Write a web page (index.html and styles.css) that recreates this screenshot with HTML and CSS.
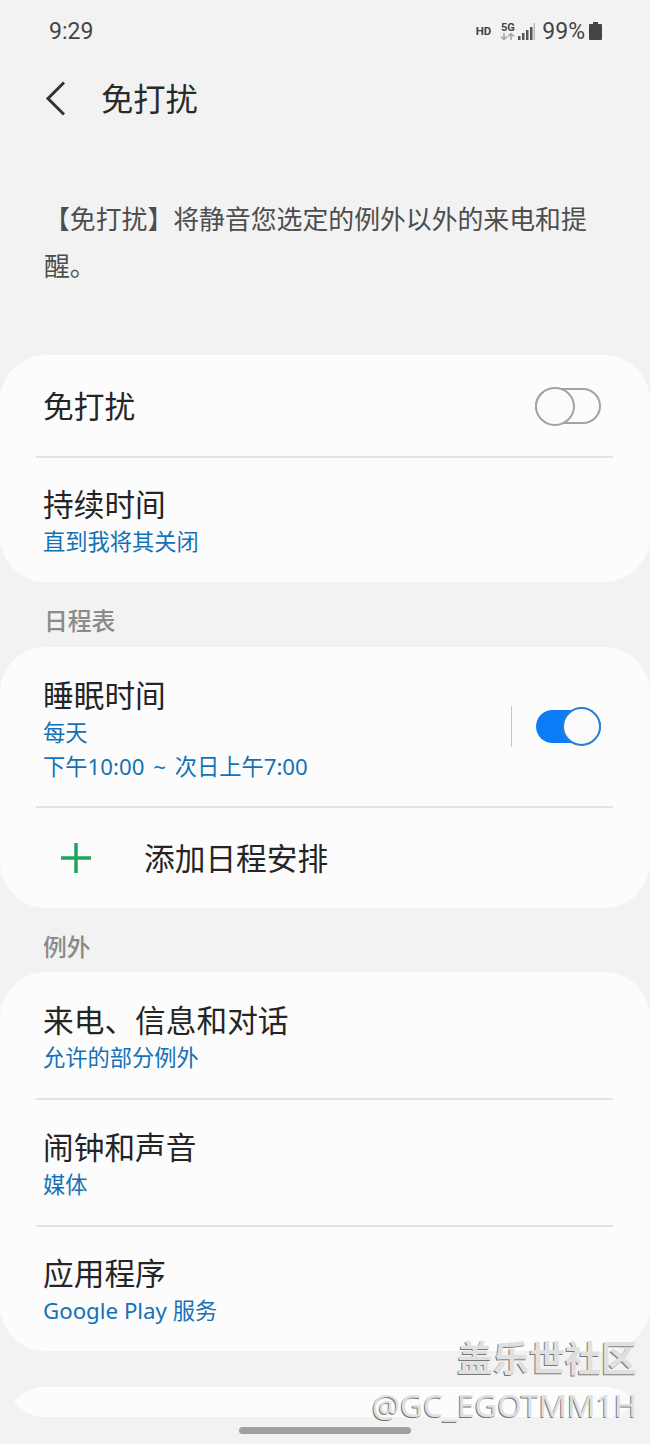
FILE: index.html
```html
<!DOCTYPE html>
<html lang="zh-CN">
<head>
    <meta charset="UTF-8">
    <meta name="viewport" content="width=device-width, initial-scale=1.0">
    <title>免打扰</title>
    <link rel="stylesheet" href="styles.css">
</head>
<body>
    <div class="page">
        <div class="status">
            <span class="time">9:29</span>
            <div class="status-right">
                <span class="hd">HD</span>
                <div class="net">
                    <span class="fiveg">5G</span>
                    <svg width="15" height="7" viewBox="0 0 15 7">
                        <path d="M4 0v6M1 3.500l3 3 3-3" fill="none" stroke="#a8a8a8" stroke-width="1.600"/>
                        <path d="M11 7V1M8 3.500l3-3 3 3" fill="none" stroke="#a8a8a8" stroke-width="1.600"/>
                    </svg>
                </div>
                <svg class="signal" width="17" height="17" viewBox="0 0 17 17">
                    <rect x="0" y="13" width="2.500" height="4" fill="#555"/>
                    <rect x="4" y="10" width="2.500" height="7" fill="#555"/>
                    <rect x="8" y="7" width="2.500" height="10" fill="#555"/>
                    <rect x="12" y="4" width="2.500" height="13" fill="#555"/>
                    <rect x="15.500" y="0" width="1.500" height="17" fill="#bbb"/>
                </svg>
                <span class="pct">99%</span>
                <svg class="battery" width="13" height="18" viewBox="0 0 13 18">
                    <path d="M4 0h5v2h3a1 1 0 0 1 1 1v14a1 1 0 0 1-1 1H1a1 1 0 0 1-1-1V3a1 1 0 0 1 1-1h3z" fill="#444"/>
                </svg>
            </div>
        </div>

        <div class="header">
            <svg class="back" width="22" height="36" viewBox="0 0 22 36">
                <path d="M19 1.500L3 17.500l16 16" fill="none" stroke="#333" stroke-width="3"/>
            </svg>
            <h1>免打扰</h1>
        </div>

        <p class="desc">【免打扰】将静音您选定的例外以外的来电和提醒。</p>

        <div class="card first">
            <div class="row row-single">
                <div class="title">免打扰</div>
                <div class="toggle"><span class="thumb"></span></div>
            </div>
            <div class="row">
                <div>
                    <div class="title">持续时间</div>
                    <div class="sub">直到我将其关闭</div>
                </div>
            </div>
        </div>

        <div class="section">日程表</div>
        <div class="card">
            <div class="row row-sleep">
                <div>
                    <div class="title">睡眠时间</div>
                    <div class="sub">每天</div>
                    <div class="sub sub-time">下午10:00 ~ 次日上午7:00</div>
                </div>
                <div class="switch-wrap">
                    <span class="vline"></span>
                    <div class="toggle on"><span class="thumb"></span></div>
                </div>
            </div>
            <div class="row row-add">
                <svg class="plus" width="30" height="30" viewBox="0 0 30 30">
                    <path d="M15 0v30M0 15h30" stroke="#1fa55b" stroke-width="3.500"/>
                </svg>
                <div class="title">添加日程安排</div>
            </div>
        </div>

        <div class="section section-b">例外</div>
        <div class="card card-list">
            <div class="row">
                <div>
                    <div class="title">来电、信息和对话</div>
                    <div class="sub">允许的部分例外</div>
                </div>
            </div>
            <div class="row">
                <div>
                    <div class="title">闹钟和声音</div>
                    <div class="sub">媒体</div>
                </div>
            </div>
            <div class="row">
                <div>
                    <div class="title">应用程序</div>
                    <div class="sub">Google Play 服务</div>
                </div>
            </div>
        </div>

        <div class="card-peek"></div>
        <div class="home-bar"></div>

        <div class="watermark">
            <div class="wm-top">盖乐世社区</div>
            <div class="wm-bottom">@GC_EGOTMM1H</div>
        </div>
    </div>
</body>
</html>
```

FILE: styles.css
```css
* {
    box-sizing: border-box;
}
body {
    margin: 0;
    background-color: #f2f2f2;
    font-family: Roboto, "Noto Sans CJK SC", sans-serif;
}
.page {
    position: relative;
    width: 650px;
    height: 1444px;
    overflow: hidden;
}
.status {
    display: flex;
    justify-content: space-between;
    align-items: center;
    height: 62px;
    padding: 0 48px 0 49px;
    color: #444;
}
.time {
    font-size: 23px;
}
.status-right {
    display: flex;
    align-items: center;
}
.hd {
    font-size: 11.500px;
    font-weight: 700;
    margin-right: 9px;
}
.net {
    display: flex;
    flex-direction: column;
    align-items: center;
    margin-right: 3px;
}
.fiveg {
    font-size: 11px;
    font-weight: 700;
    line-height: 11px;
}
.signal {
    margin-right: 7px;
}
.pct {
    font-size: 23px;
    margin-right: 4px;
}
.header {
    display: flex;
    align-items: center;
    height: 74px;
    padding-left: 45px;
}
.back {
    margin-right: 34px;
}
h1 {
    margin: 0 0 4px 0;
    font-size: 32.300px;
    font-weight: 400;
    color: #2a2a2a;
}
.desc {
    margin: 61px 44px 64px 44px;
    font-size: 25.850px;
    line-height: 47px;
    color: #4d4d4d;
}
.card {
    background-color: #fcfcfc;
    border-radius: 46px;
}
.row {
    display: flex;
    align-items: center;
    justify-content: space-between;
    position: relative;
    padding: 25px 44px 22px 43px;
}
.row + .row::before {
    content: "";
    position: absolute;
    top: -1px;
    left: 36px;
    right: 37px;
    height: 2px;
    background-color: #e3e3e3;
}
.row-single {
    height: 102px;
    padding-top: 0;
    padding-bottom: 0;
    padding-right: 49px;
}
.row-sleep {
    padding-top: 26px;
    padding-bottom: 22px;
    padding-right: 49px;
}
.row-add {
    justify-content: flex-start;
    height: 101px;
    padding: 0 0 0 61px;
}
.card-list .row {
    padding-top: 26px;
    padding-bottom: 23px;
}
.card-list .row:last-child {
    padding-top: 25px;
    padding-bottom: 22px;
}
.plus {
    margin-right: 53px;
}
.title {
    padding-top: 4px;
    font-size: 30.700px;
    line-height: 40px;
    color: #252525;
}
.sub {
    padding-top: 1px;
    padding-bottom: 3px;
    font-family: "Noto Sans", "Noto Sans CJK SC", sans-serif;
    font-size: 22.250px;
    line-height: 30px;
    color: #1571b5;
}
.sub-time {
    word-spacing: 3px;
}
.section {
    height: 65px;
    padding: 23px 0 0 44px;
    font-size: 23.800px;
    line-height: 34px;
    font-weight: 500;
    color: #8a8a8a;
}
.section-b {
    padding-left: 43px;
    height: 64px;
}
.switch-wrap {
    display: flex;
    align-items: center;
    margin-bottom: 5px;
}
.vline {
    width: 1px;
    height: 41px;
    margin-right: 24px;
    background-color: #c8c8c8;
}
.toggle {
    display: flex;
    align-items: center;
    width: 66px;
    height: 36px;
    border: 2px solid #a3a3a3;
    border-radius: 18px;
}
.thumb {
    flex: none;
    width: 40px;
    height: 39px;
    margin-left: -2px;
    border: 2px solid #a3a3a3;
    border-radius: 50%;
    background-color: #fbfbfb;
}
.toggle.on {
    justify-content: flex-end;
    width: 65px;
    height: 33px;
    border: none;
    background-color: #0a7cf5;
}
.toggle.on .thumb {
    width: 39px;
    margin-left: 0;
    border-color: #2a7fd0;
}
.card-peek {
    width: 622px;
    height: 30px;
    margin: 36px 14px 0 14px;
    background-color: #fcfcfc;
    clip-path: path("M0 15 Q10 3 26 0 H596 Q612 3 622 15 Q612 27 596 30 H26 Q10 27 0 15 Z");
}
.home-bar {
    width: 172px;
    height: 7px;
    margin: 10px 0 0 239px;
    border-radius: 4px;
    background-color: #a0a0a0;
}
.watermark {
    position: absolute;
    right: 13px;
    top: 1338px;
    text-align: right;
    color: #e0e0e0;
    text-shadow: -1px 1px 0 #777;
}
.wm-top {
    font-size: 36px;
    line-height: 44px;
    font-weight: 700;
}
.wm-bottom {
    font-family: "Noto Sans", sans-serif;
    font-size: 31.500px;
    line-height: 46px;
}
```
